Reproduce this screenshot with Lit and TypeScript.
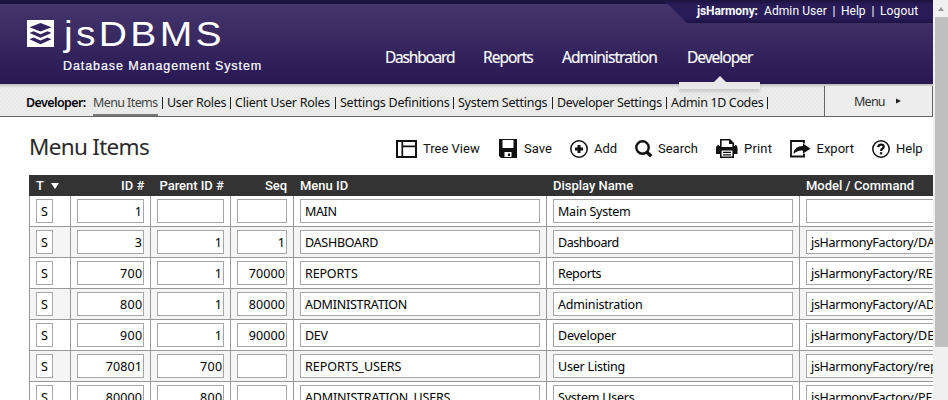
import { LitElement, html, css, svg } from "lit";
import { customElement, property } from "lit/decorators.js";

/** A single-line label whose tracking is adjusted to fill a given width. */
@customElement("fit-text")
class FitText extends LitElement {
  @property() text = "";
  @property({ type: Number }) w = 0;
  static styles = css`
    :host { display: inline-block; white-space: pre; flex: none; }
    .t { display: inline-block; }
  `;
  updated() {
    const el = this.renderRoot.querySelector(".t") as HTMLElement;
    el.style.letterSpacing = "0px";
    const natural = el.offsetWidth;
    el.style.letterSpacing = (this.w - natural) / Math.max(1, this.text.length) + "px";
    this.style.width = this.w + "px";
  }
  render() {
    return html`<span class="t">${this.text}</span>`;
  }
}

const fit = (text: string, w: number) => html`<fit-text .text=${text} .w=${w}></fit-text>`;

const icons: Record<string, unknown> = {
  tree: svg`<svg width="21" height="18" viewBox="0 0 21 18" fill="none" stroke="#111" stroke-width="2"><path d="M1 1H20V17H1Z"/><path stroke-width="1.700" d="M6.300 1V17M6.300 6.400H20"/></svg>`,
  save: svg`<svg width="18" height="19" viewBox="0 0 18 19"><path fill="#111" fill-rule="evenodd" d="M0 0H18V19H2L0 17ZM3.500 1V9H14.500V1ZM5.500 13V18H12.500V13Z"/><path fill="#111" d="M9 14.500h2v2.500h-2z"/></svg>`,
  add: svg`<svg width="18" height="18" viewBox="0 0 18 18" fill="none" stroke="#111"><circle cx="9" cy="9" r="8.200" stroke-width="1.500"/><path stroke-width="3" d="M9 5V13M5 9H13"/></svg>`,
  search: svg`<svg width="18" height="18" viewBox="0 0 18 18" fill="none" stroke="#111"><circle cx="7.500" cy="7.500" r="6.200" stroke-width="2.400"/><path stroke-width="3.400" d="M11.500 11.700L16.300 16.300"/></svg>`,
  print: svg`<svg width="22" height="19" viewBox="0 0 22 19"><path fill="#111" fill-rule="evenodd" d="M4 0H14L18 4V7H19V6H20Q21.500 7 21.500 9V15H18V19H4V15H0V9Q0 7 2 6H3V7H4ZM5.600 1.500V8H16.400V5H13V1.500ZM5.600 11.500V17.500H16.400V11.500Z"/><path fill="#111" d="M7 12.700h8v1.200H7zM7 15.200h8v1.200H7z"/></svg>`,
  export: svg`<svg width="21" height="18" viewBox="0 0 21 18"><path fill="none" stroke="#111" stroke-width="1.800" d="M14 3.500V1H1V16.500H14V13.500"/><path fill="#111" d="M3.500 14Q4 6 13 6V3.500L20.500 8.700L13 13.500V10.500Q7 10 3.500 14Z"/></svg>`,
  help: svg`<svg width="18" height="18" viewBox="0 0 18 18" fill="none" stroke="#111"><circle cx="9" cy="9" r="8.200" stroke-width="1.500"/><path stroke-width="2.200" d="M6.200 7.200Q6.400 4.600 9 4.600Q11.700 4.600 11.700 6.800Q11.700 8 10.300 8.800Q9.100 9.500 9.100 10.900"/><path stroke-width="2.400" d="M9.100 12.200V14.400"/></svg>`,
};

// icon, label, label width, left edge, icon column width
const tools: [string, string, number, number, number][] = [
  ["tree", "Tree View", 57, 396, 27],
  ["save", "Save", 28, 499, 25],
  ["add", "Add", 23, 570, 24],
  ["search", "Search", 40, 635, 23],
  ["print", "Print", 28, 716, 28],
  ["export", "Export", 38, 790, 26.5],
  ["help", "Help", 27, 872, 24],
];

const nav: [string, number][] = [["Dashboard", 69], ["Reports", 50], ["Administration", 95], ["Developer", 65]];

const sub: [string, number, number][] = [
  ["Menu Items", 65, 9],
  ["User Roles", 59, 9],
  ["Client User Roles", 95, 10],
  ["Settings Definitions", 109, 9],
  ["System Settings", 89, 10],
  ["Developer Settings", 105, 9],
  ["Admin 1D Codes", 92, 9],
];

const rows: [string, string, string, string, number, string, number, string][] = [
  ["1", "", "", "MAIN", 31.5, "Main System", 72.5, ""],
  ["3", "1", "1", "DASHBOARD", 73.5, "Dashboard", 61, "DASHBOARD"],
  ["700", "1", "70000", "REPORTS", 53, "Reports", 43.5, "REPORTS"],
  ["800", "1", "80000", "ADMINISTRATION", 102.5, "Administration", 84.5, "ADMINISTRATION"],
  ["900", "1", "90000", "DEV", 23, "Developer", 58, "DEVELOPER"],
  ["70801", "700", "", "REPORTS_USERS", 96.5, "User Listing", 67.5, "reports"],
  ["80000", "800", "", "ADMINISTRATION_USERS", 145.5, "System Users", 76.5, "PE"],
];

@customElement("app-root")
class AppRoot extends LitElement {
  static styles = css`
    * { box-sizing: border-box; }
    :host {
      display: flex; width: 948px; height: 400px; overflow: hidden; background: #fff;
      font-family: "Noto Sans", sans-serif; font-size: 12.5px; color: #111;
    }
    svg { display: block; flex: none; }
    .page { width: 933px; height: 400px; overflow: hidden; position: relative; }
    .head {
      height: 84px; border-top: 4px solid #1c133e; position: relative; display: flex;
      background: linear-gradient(#44366c, #281853);
    }
    .user {
      position: absolute; right: 0; top: -4px; width: 268px; height: 23px; padding-left: 32px;
      clip-path: polygon(0 0, 100% 0, 100% 100%, 22px 100%, 3px 4px, 0 4px);
      background: linear-gradient(#1c133e, #281c58 5px, #281c58 18px, #1c1342);
      color: #fff; font: 12px/22px Roboto, sans-serif; display: flex; white-space: pre;
    }
    .user b { font-weight: 700; }
    .user .bar { width: 14px; text-align: center; }
    .logo { padding: 16px 0 0 27px; display: flex; color: #fff; width: 385px; font-family: "Liberation Sans", sans-serif; }
    .words { margin: -3px 0 0 9px; }
    .name { font-size: 35.500px; line-height: 35px; height: 41px; transform: scaleX(1.1); transform-origin: 0 0; margin-left: 1px; }
    .tag { font-size: 12.500px; line-height: 16px; -webkit-text-stroke: .2px #fff; }
    .nav { display: flex; gap: 29px; padding-top: 41px; font-size: 15.500px; line-height: 24px; color: #fff; -webkit-text-stroke: .15px #fff; }
    .nav > div { position: relative; }
    .nav > :last-child { margin-left: 1px; }
    .marker { position: absolute; left: -8px; top: 37px; width: 81px; height: 7px; background: #e8e8e8; box-shadow: 0 3px 3px rgba(0, 0, 0, .13); z-index: 2; }
    .marker::before { content: ""; position: absolute; left: 35px; top: -6px; border: 6px solid transparent; border-top: 0; border-bottom-color: #e8e8e8; }
    .sub {
      height: 33px; border-bottom: 1px solid #666; display: flex; padding-left: 26px; line-height: 37px; position: relative;
      background: linear-gradient(#bbb, rgba(204, 204, 204, 0) 4px), repeating-linear-gradient(135deg, #eee 0 1.414px, #e7e7e7 1.414px 2.828px);
    }
    .sub b { font-weight: 600; color: #000; margin-right: 7px; }
    .sub .on { height: 32px; border-bottom: 2px solid #777; color: #444; }
    .sep { width: 9px; flex: none; display: flex; justify-content: center; padding-top: 13px; }
    .sep::before { content: ""; width: 1px; height: 12px; background: #222; }
    .menu {
      margin: 2px 0 0 auto; width: 109px; height: 30px; border: 1px solid #666; border-width: 0 1px; background: #ededed;
      padding-left: 29px; line-height: 32px; display: flex; align-items: center; gap: 11px; color: #333;
    }
    .menu fit-text { padding-top: 1px; }
    .title { display: flex; height: 58px; padding-left: 29px; position: relative; }
    h1 { margin: 0; font-weight: 370; font-size: 22.500px; line-height: 59px; width: 367px; color: #2a2a2a; }
    .tools { display: flex; font: 13px/63px Roboto, sans-serif; }
    .tool { display: flex; flex: none; }
    .ico { display: flex; align-items: center; height: 63px; flex: none; }
    .grid { margin-left: 29px; width: 1100px; }
    .row { display: grid; grid-template-columns: 41px 80px 80px 63px 253px 253px 1fr; height: 31px; border-bottom: 1px solid #999; }
    .row:nth-child(odd) { background: #f5f5f5; }
    .cell { border-left: 1px solid #999; padding: 3px 6px; }
    .box { height: 24px; border: 1px solid #a6a6a6; background: #fff; padding-left: 4px; line-height: 24px; color: #000; white-space: pre; overflow: hidden; }
    .small { width: 17px; }
    .num { text-align: right; padding-right: 1px; }
    .hrow { display: grid; grid-template-columns: 41px 80px 80px 63px 253px 253px 1fr; height: 21px; background: #333; color: #fff; font: 500 13px/22px Roboto, sans-serif; }
    .hrow > div { padding: 0 6px 0 7px; display: flex; }
    .hrow .r { justify-content: flex-end; }
    .tri { margin: 8px 0 0 7px; height: 0; border: 4px solid transparent; border-top: 6px solid #fff; border-bottom: 0; }
    .scroll { width: 15px; height: 400px; background: #f0f0f0; padding: 7px 0 0 2px; }
    .up { margin: 0 3px 6px; width: 0; border: 3.500px solid transparent; border-top: 0; border-bottom: 4px solid #999; }
    .thumb { height: 330px; background: #c0c0c0; }
  `;

  num(v: string) {
    return html`<div class="cell"><div class="box num">${v ? fit(v, v.length * 7.3) : ""}</div></div>`;
  }

  render() {
    return html`
      <div class="page">
        <div class="head">
          <div class="logo">
            <svg width="27" height="27" viewBox="0 0 27 27">
              <path fill="#fff" d="M0 0H27V27H0Z" />
              <g fill="#33245f">
                <path d="M13.500 3L24.500 7.200L13.500 11.500L2.500 7.200Z" />
                <path d="M2.500 13L6.500 11.300L13.500 14.200L20.500 11.300L24.500 13L13.500 17.800Z" />
                <path d="M2.500 19.300L6.500 17.600L13.500 20.500L20.500 17.600L24.500 19.300L13.500 24.200Z" />
              </g>
            </svg>
            <div class="words">
              <div class="name">${fit("jsDBMS", 146)}</div>
              <div class="tag">${fit("Database Management System", 199)}</div>
            </div>
          </div>
          <div class="nav">
            ${nav.map(([t, w], i) => html`<div>${fit(t, w)}${i === 3 ? html`<div class="marker"></div>` : ""}</div>`)}
          </div>
          <div class="user">
            <b>${fit("jsHarmony:", 61)}</b><span>  </span>${fit("Admin User", 63)}<span class="bar">|</span>${fit("Help", 25)}<span class="bar">|</span>${fit("Logout", 38)}
          </div>
        </div>
        <div class="sub">
          <b>${fit("Developer:", 60)}</b>
          ${sub.map(([t, w, g], i) => html`<div class=${i ? "" : "on"}>${fit(t, w)}</div><div class="sep" style="width:${g}px"></div>`)}
          <div class="menu">${fit("Menu", 31)}<svg width="5" height="6" viewBox="0 0 5 6"><path fill="#222" d="M0 .5L5 3L0 5.500Z" /></svg></div>
        </div>
        <div class="title">
          <h1>${fit("Menu Items", 120)}</h1>
          <div class="tools">
            ${tools.map(([ic, t, w, x, iw], i) => {
              const end = x + iw + w;
              const next = i < tools.length - 1 ? tools[i + 1][3] : end;
              return html`<div class="tool" style="width:${next - x}px"><div class="ico" style="width:${iw}px">${icons[ic]}</div>${fit(t, w)}</div>`;
            })}
          </div>
        </div>
        <div class="grid">
          <div class="hrow">
            <div>T<span class="tri"></span></div>
            <div class="r">${fit("ID #", 23)}</div>
            <div class="r">${fit("Parent ID #", 64.5)}</div>
            <div class="r">${fit("Seq", 22)}</div>
            <div>${fit("Menu ID", 48)}</div>
            <div>${fit("Display Name", 80)}</div>
            <div>${fit("Model / Command", 108)}</div>
          </div>
          ${rows.map(([id, parent, seq, menu, mw, name, nw, model]) => html`<div class="row">
            <div class="cell"><div class="box small">S</div></div>
            ${this.num(id)}${this.num(parent)}${this.num(seq)}
            <div class="cell"><div class="box">${fit(menu, mw)}</div></div>
            <div class="cell"><div class="box">${fit(name, nw)}</div></div>
            <div class="cell"><div class="box">${model ? html`${fit("jsHarmonyFactory/", 107)}${model}` : ""}</div></div>
          </div>`)}
        </div>
      </div>
      <div class="scroll"><div class="up"></div><div class="thumb"></div></div>
    `;
  }
}
